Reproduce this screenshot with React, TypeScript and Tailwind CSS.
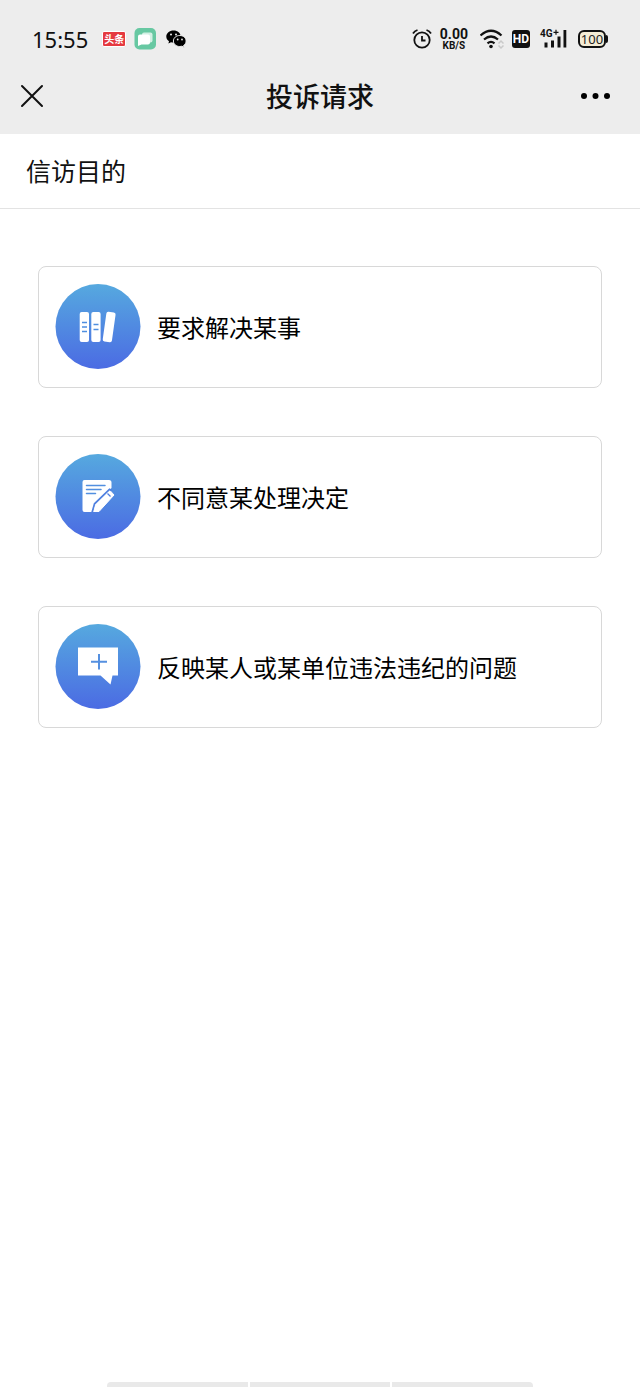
import React from 'react'

const purposes = [
  { id: 'resolve', label: '要求解决某事', icon: <BooksIcon /> },
  { id: 'disagree', label: '不同意某处理决定', icon: <NoteIcon /> },
  { id: 'report', label: '反映某人或某单位违法违纪的问题', icon: <MessageIcon /> },
]

function BooksIcon(){
  return (
    <g>
      <rect x="24.700" y="28" width="9.300" height="30" rx="2" fill="#fff" />
      <rect x="36.300" y="28" width="9.300" height="30" rx="2" fill="#fff" />
      <rect x="49.500" y="28" width="9.300" height="30" rx="2" fill="#fff" transform="rotate(8 54 43)" />
      <path d="M27 38.500h5M27 43h5M27 47.500h5M38.500 40.500h5M38.500 45.500h5" stroke="#4f8fe0" strokeWidth="1.700" />
    </g>
  )
}

function NoteIcon(){
  return (
    <g>
      <path d="M29.500 26H54a2.500 2.500 0 0 1 2.500 2.500V34L40 49.500L37 58H29.500a2 2 0 0 1-2-2V28a2 2 0 0 1 2-2z" fill="#fff" />
      <path d="M31.500 31.500H50M31.500 35.500H46M31.500 39.500H40.500" stroke="#528fe0" strokeWidth="1.500" strokeLinecap="round" />
      <path d="M54.500 36L59 41L44 57.500H38.500L40.500 50z" fill="#fff" stroke="#fff" strokeLinejoin="round" />
      <path d="M37 58.500L39.500 49.800L54.500 35.300L56.500 36.500" stroke="#5080e0" strokeWidth="1.600" fill="none" />
      <path d="M52.500 39.500L55.500 42.500" stroke="#5080e0" strokeWidth="1.300" />
    </g>
  )
}

function MessageIcon(){
  return (
    <g>
      <path d="M23 23.500H63V51.500H57.500L55.500 60.500L45.500 51.500H23z" fill="#fff" />
      <path d="M44 30V45.500M36 37.700H52" stroke="#5590e0" strokeWidth="2" />
    </g>
  )
}

function AppIcons(){
  return (
    <div className="flex items-center gap-2">
      <span className="flex h-4 w-6 items-center justify-center rounded-xs border border-white bg-[#e5393f] text-[10px] leading-none font-bold text-white">头条</span>
      <svg className="size-6" viewBox="0 0 24 24" aria-hidden="true">
        <rect x=".500" y="1" width="21.500" height="21.500" rx="5" fill="#67c8a2" />
        <rect x="8" y="5.500" width="10.500" height="10" rx="2" fill="#d3f0e4" />
        <path d="M6 7.500h8a2 2 0 0 1 2 2v6a2 2 0 0 1-2 2H7.500L4 19V9.500A2 2 0 0 1 6 7.500z" fill="#fff" />
      </svg>
      <svg className="h-5 w-6" viewBox="0 0 24 20" aria-hidden="true">
        <path d="M7.500 1.500C3.500 1.500.300 4.200.300 7.500c0 2 1 3.600 2.700 4.700L2.400 14.500l2.600-1.300c.8.200 1.700.400 2.500.400 4.200 0 7.200-2.700 7.200-6.100S11.700 1.500 7.500 1.500z" />
        <path d="M13.800 6.500c-3.600 0-6.400 2.400-6.400 5.500s2.800 5.500 6.400 5.500c.8 0 1.500-.1 2.200-.3l2.200 1.200-.6-2c1.500-1 2.500-2.500 2.500-4.400 0-3.100-2.700-5.500-6.300-5.500z" stroke="#ededed" strokeWidth="1" />
        <g fill="#ededed">
          <circle cx="5" cy="5.500" r="1" />
          <circle cx="10" cy="5.500" r="1" />
          <circle cx="11.700" cy="10.500" r=".9" />
          <circle cx="16" cy="10.500" r=".9" />
        </g>
      </svg>
    </div>
  )
}

function SystemIcons(){
  return (
    <div className="flex items-center">
      <svg className="h-6 w-5" viewBox="0 0 20 24" fill="none" stroke="#111" strokeWidth="1.800" aria-hidden="true">
        <circle cx="10" cy="13" r="7.700" />
        <path d="M10 9v4.500h3.500M1 6.500Q2.500 4 5.500 3M19 6.500Q17.500 4 14.500 3" />
      </svg>
      <div className="ml-2 flex flex-col items-center font-[Roboto,sans-serif] font-bold text-[#111]">
        <span className="text-sm leading-[14px]">0.00</span>
        <span className="text-[10px] leading-[10px]">KB/S</span>
      </div>
      <svg className="ml-3 h-6 w-6" viewBox="0 0 24 24" fill="none" aria-hidden="true">
        <path d="M.500 8.500Q11-1 21.500 8.500M4 12.500Q11 6.500 18 12.500M7.500 16.300Q11 13.300 14.500 16.300" stroke="#111" strokeWidth="2.200" />
        <circle cx="11" cy="19.500" r="1.800" fill="#111" />
        <path d="M18.500 16.500L21 14l2.500 2.500M18.500 18.500L21 21l2.500-2.500" stroke="#c9c9c9" strokeWidth="1.500" />
      </svg>
      <span className="ml-2 flex h-[18px] w-[18px] items-center justify-center rounded-[3px] bg-[#111] font-[Roboto,sans-serif] text-xs leading-none font-bold text-white">HD</span>
      <div className="relative ml-2.5 h-5 w-7">
        <span className="absolute top-0 left-0 font-[Roboto,sans-serif] text-[10px] leading-[10px] font-bold">4G</span>
        <svg className="h-full w-full" viewBox="0 0 28 20" aria-hidden="true">
          <path d="M4.500 13.500h3V18.500h-3zM11 11.500h3v7h-3zM17.500 7.500h3v11h-3zM23.500 1h2.800v17.500H23.500zM13.500 2.800h5v1.200h-5zM15.400.8h1.200v5h-1.200z" fill="#111" />
        </svg>
      </div>
      <div className="ml-2.5 flex items-center">
        <span className="flex h-[18px] w-7 items-center justify-center rounded-md border-2 border-[#111] bg-[#f4ecd5] font-['Noto_Sans',sans-serif] text-[13px] leading-none text-[#222]">100</span>
        <span className="h-2 w-0.5 rounded-r bg-[#111]" />
      </div>
    </div>
  )
}

export default function App(){
  return (
    <div className="flex min-h-screen flex-col bg-white font-['Noto_Sans_CJK_SC',sans-serif] text-[#111]">
      <header className="bg-[#ededed]">
        <div className="flex h-[78px] items-center justify-between px-8">
          <div className="flex items-center gap-3.5">
            <span className="font-['Noto_Sans',sans-serif] text-[22px] leading-none">15:55</span>
            <AppIcons />
          </div>
          <SystemIcons />
        </div>
        <div className="flex h-14 items-start justify-between px-5">
          <button type="button" aria-label="关闭" className="flex h-9 w-10 items-center">
            <svg className="size-6" viewBox="0 0 24 24" fill="none" stroke="#111" strokeWidth="2" strokeLinecap="round" aria-hidden="true">
              <path d="M2 2L22 22M22 2L2 22" />
            </svg>
          </button>
          <h1 className="text-[27px] leading-9 font-medium">投诉请求</h1>
          <button type="button" aria-label="更多" className="flex h-9 w-10 items-center">
            <svg className="h-6 w-10" viewBox="0 0 40 24" aria-hidden="true">
              <circle cx="4" cy="12" r="3" />
              <circle cx="15.500" cy="12" r="3" />
              <circle cx="27" cy="12" r="3" />
            </svg>
          </button>
        </div>
      </header>

      <h2 className="border-b border-[#e3e3e3] px-[26px] pt-[18px] pb-5 text-[25px] leading-9">信访目的</h2>

      <main className="flex flex-1 flex-col gap-12 px-[38px] pt-[57px]">
        {purposes.map(p => (
          <button key={p.id} type="button" className="flex w-full items-center gap-4 rounded-lg border border-[#d8d8d8] px-4 py-[17px] text-left text-2xl text-black">
            <svg className="size-[86px] shrink-0" viewBox="0 0 86 86" aria-hidden="true">
              <defs>
                <linearGradient id={p.id} x1="0" y1="0" x2="0" y2="1">
                  <stop offset="0" stopColor="#56a9df" />
                  <stop offset="1" stopColor="#4b6be3" />
                </linearGradient>
              </defs>
              <circle cx="43" cy="42.500" r="42.500" fill={`url(#${p.id})`} />
              {p.icon}
            </svg>
            <span>{p.label}</span>
          </button>
        ))}
      </main>

      <div className="mx-auto flex w-2/3 gap-0.5 overflow-hidden rounded-t">
        <span className="h-[5px] flex-1 bg-[#e9e9e9]" />
        <span className="h-[5px] flex-1 bg-[#e9e9e9]" />
        <span className="h-[5px] flex-1 bg-[#e9e9e9]" />
      </div>
    </div>
  )
}
